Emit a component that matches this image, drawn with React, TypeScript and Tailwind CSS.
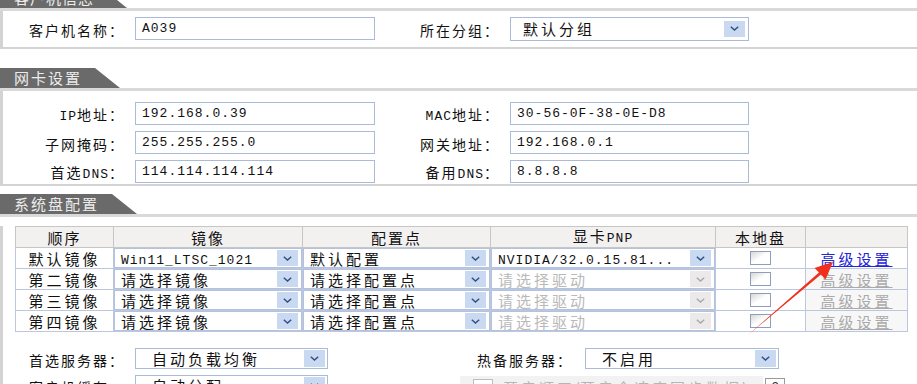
import React from "react";

const CJK = "text-[14px] tracking-[2px]";
const ASC = "font-['Liberation_Mono',monospace] text-[13px] tracking-[1px]";
const CJK_S = "text-[15px] tracking-[3px]";

function Mix({ text, c = CJK, a = ASC }: { text: string; c?: string; a?: string }) {
  const parts = text.split(/([\x00-\x7F]+)/).filter((p) => p.length > 0);
  return (
    <>
      {parts.map((p, i) =>
        /^[\x00-\x7F]+$/.test(p) ? (
          <span key={i} className={a}>
            {p}
          </span>
        ) : (
          <span key={i} className={c}>
            {p}
          </span>
        )
      )}
    </>
  );
}

function Chevron({ color }: { color: string }) {
  return (
    <svg width="9" height="5" viewBox="0 0 9 5">
      <path d="M0.8 0.8 L4.5 4 L8.2 0.8" fill="none" stroke={color} strokeWidth="1.4" />
    </svg>
  );
}

function SectionHead({ title, narrow }: { title: string; narrow?: boolean }) {
  return (
    <div>
      <div className="flex h-[20px]">
        <div
          className={
            "h-full bg-[#6a6a6a] text-[#ececec] text-[15px] leading-[20px] pl-[14px] whitespace-nowrap " +
            (narrow ? "tracking-[1px] pr-[8px]" : "tracking-[2px] pr-[13px]")
          }
        >
          {title}
        </div>
        <div className="h-full w-[25px] bg-[#6a6a6a] [clip-path:polygon(0_0,100%_100%,0_100%)]" />
      </div>
      <div className="h-[3px] bg-[#d9d9d9]" />
    </div>
  );
}

function Input({ value, w }: { value: string; w: "a" | "b" }) {
  return (
    <div
      className={
        (w === "a" ? "w-[240px] " : "w-[239px] ") +
        "ml-[10px] h-[23px] border border-[#a9bbd9] bg-white flex items-center pl-[6px] whitespace-nowrap text-[#111]"
      }
    >
      <Mix text={value} />
    </div>
  );
}

function Label({ text, w }: { text: string; w: "a" | "b" }) {
  return (
    <div className={(w === "a" ? "w-[122px] " : "w-[125px] ") + "text-right whitespace-nowrap text-[#111]"}>
      <Mix text={text} />
    </div>
  );
}

function Row({ l1, v1, l2, v2 }: { l1: string; v1: string; l2: string; v2: string }) {
  return (
    <div className="flex items-center h-[23px]">
      <Label text={l1} w="a" />
      <Input value={v1} w="a" />
      <Label text={l2} w="b" />
      <Input value={v2} w="b" />
    </div>
  );
}

function CellSelect({ text, disabled }: { text: string; disabled?: boolean }) {
  return (
    <div className="h-[20px] flex items-center border border-[#b3c2de] bg-white">
      <div className={"flex-1 pl-[6px] whitespace-nowrap overflow-hidden " + (disabled ? "text-[#b9b9b9]" : "text-[#111]")}>
        <Mix text={text} c={CJK_S} />
      </div>
      <div
        className={
          "w-[21px] h-[16px] mr-[3px] flex items-center justify-center " + (disabled ? "bg-[#ebe9e9]" : "bg-[#c8d9f1]")
        }
      >
        <Chevron color={disabled ? "#a9a9a9" : "#2f4f7f"} />
      </div>
    </div>
  );
}

function Check() {
  return <div className="mx-auto w-[21px] h-[14px] border border-[#8f9db6] bg-linear-to-br from-[#d6d6d6] via-white to-white" />;
}

function BigSelect({ text, wide }: { text: string; wide?: boolean }) {
  return (
    <div
      className={
        (wide ? "w-[194px] ml-[12px] " : "w-[193px] ml-[10px] ") +
        "h-[21px] border border-[#a9bbd9] bg-white flex items-center"
      }
    >
      <div className="flex-1 pl-[16px] whitespace-nowrap text-[#111]">
        <span className={CJK_S}>{text}</span>
      </div>
      <div className="w-[21px] h-[17px] mr-[2px] bg-[#c8d9f1] flex items-center justify-center">
        <Chevron color="#2f4f7f" />
      </div>
    </div>
  );
}

const rows = [
  { name: "默认镜像", img: "Win11_LTSC_1021", cfg: "默认配置", gpu: "NVIDIA/32.0.15.81...", first: true },
  { name: "第二镜像", img: "请选择镜像", cfg: "请选择配置点", gpu: "请选择驱动", first: false },
  { name: "第三镜像", img: "请选择镜像", cfg: "请选择配置点", gpu: "请选择驱动", first: false },
  { name: "第四镜像", img: "请选择镜像", cfg: "请选择配置点", gpu: "请选择驱动", first: false },
];

export default function App() {
  return (
    <div className="relative w-[917px] h-[384px] overflow-hidden bg-white text-[#111] font-['Noto_Sans_CJK_SC',sans-serif]">
      <div className="mt-[-12px]">
        {/* 客户机信息 */}
        <SectionHead title="客户机信息" narrow />
        <div className="border-l-[3px] border-b-[2px] border-[#d3d3d3] pt-[6px] pb-[7px]">
          <div className="flex items-center h-[23px]">
            <Label text="客户机名称：" w="a" />
            <Input value="A039" w="a" />
            <Label text="所在分组：" w="b" />
            <div className="ml-[10px] w-[239px] h-[24px] border border-[#a9bbd9] bg-white flex items-center">
              <div className="flex-1 pl-[12px] whitespace-nowrap">
                <span className={CJK_S}>默认分组</span>
              </div>
              <div className="w-[21px] h-[16px] mr-[3px] bg-[#c8d9f1] flex items-center justify-center">
                <Chevron color="#2f4f7f" />
              </div>
            </div>
          </div>
        </div>

        {/* 网卡设置 */}
        <div className="mt-[19px]">
          <SectionHead title="网卡设置" />
          <div className="border-l-[3px] border-b-[2px] border-[#d3d3d3] pt-[11px] pb-[1px] flex flex-col gap-[6px]">
            <Row l1="IP地址：" v1="192.168.0.39" l2="MAC地址：" v2="30-56-0F-38-0E-D8" />
            <Row l1="子网掩码：" v1="255.255.255.0" l2="网关地址：" v2="192.168.0.1" />
            <Row l1="首选DNS：" v1="114.114.114.114" l2="备用DNS：" v2="8.8.8.8" />
          </div>
        </div>

        {/* 系统盘配置 */}
        <div className="mt-[8px]">
          <SectionHead title="系统盘配置" />
          <div className="border-l-[3px] border-[#d3d3d3] h-[220px]">
            <table className="ml-[12px] mt-[9px] border-collapse table-fixed w-[892px]">
              <colgroup>
                <col className="w-[98px]" />
                <col className="w-[189px]" />
                <col className="w-[188px]" />
                <col className="w-[225px]" />
                <col className="w-[90px]" />
                <col className="w-[102px]" />
              </colgroup>
              <thead>
                <tr className="h-[19px] bg-[#f3f0f0]">
                  {["顺序", "镜像", "配置点", "显卡PNP", "本地盘", ""].map((h, i) => (
                    <th key={i} className="border border-[#c6c6c6] font-normal text-center p-0 leading-[17px]">
                      <Mix text={h} c="text-[15px] tracking-[2px]" />
                    </th>
                  ))}
                </tr>
              </thead>
              <tbody>
                {rows.map((r, i) => (
                  <tr key={i} className="h-[21px]">
                    <td className="border border-[#bcc7dd] text-center p-0 leading-[19px]">
                      <span className={CJK_S}>{r.name}</span>
                    </td>
                    <td className="border border-[#bcc7dd] p-0">
                      <CellSelect text={r.img} />
                    </td>
                    <td className="border border-[#bcc7dd] p-0">
                      <CellSelect text={r.cfg} />
                    </td>
                    <td className="border border-[#bcc7dd] p-0">
                      <CellSelect text={r.gpu} disabled={!r.first} />
                    </td>
                    <td className="border border-[#bcc7dd] p-0">
                      <Check />
                    </td>
                    <td className={"border border-[#bcc7dd] p-0 text-center leading-[19px] " + (r.first ? "bg-white" : "bg-[#f7f7f7]")}>
                      <span
                        className={
                          "underline text-[15px] tracking-[3px] " + (r.first ? "text-[#2424d8]" : "text-[#aaaaaa]")
                        }
                      >
                        高级设置
                      </span>
                    </td>
                  </tr>
                ))}
              </tbody>
            </table>

            <div className="mt-[16px] flex items-center h-[21px]">
              <Label text="首选服务器：" w="a" />
              <BigSelect text="自动负载均衡" />
              <div className="w-[245px] text-right whitespace-nowrap">
                <Mix text="热备服务器：" />
              </div>
              <BigSelect text="不启用" wide />
            </div>
            <div className="mt-[6px] flex items-start">
              <div className="flex items-center h-[21px]">
                <Label text="客户机缓存：" w="a" />
                <BigSelect text="自动分配" />
              </div>
              <div className="ml-[132px] mt-[1px] w-[303px] h-[28px] bg-[#f2f2f2] flex items-start pt-[3px] pl-[13px]">
                <div className="w-[20px] h-[16px] border border-[#bdbdbd] bg-white" />
                <div className="ml-[10px] whitespace-nowrap text-[#b5b5b5] leading-[16px]">
                  <Mix text="开启顺工(开启全速度同步数据)" c={CJK_S} a="text-[15px]" />
                </div>
              </div>
              <div className="ml-[2px] mt-[3px] w-[20px] h-[17px] border border-[#9a9a9a] bg-white flex items-center justify-center text-[12px] font-['Liberation_Sans',sans-serif] text-[#333]">
                ?
              </div>
            </div>
          </div>
        </div>
      </div>

      {/* red arrow annotation */}
      <svg className="absolute inset-0 pointer-events-none" width="917" height="384" viewBox="0 0 917 384">
        <polygon
          points="747,336 821,274.4 825.5,279.5 833,262 814.5,268 819,272.6"
          fill="#f0301c"
        />
      </svg>
    </div>
  );
}
